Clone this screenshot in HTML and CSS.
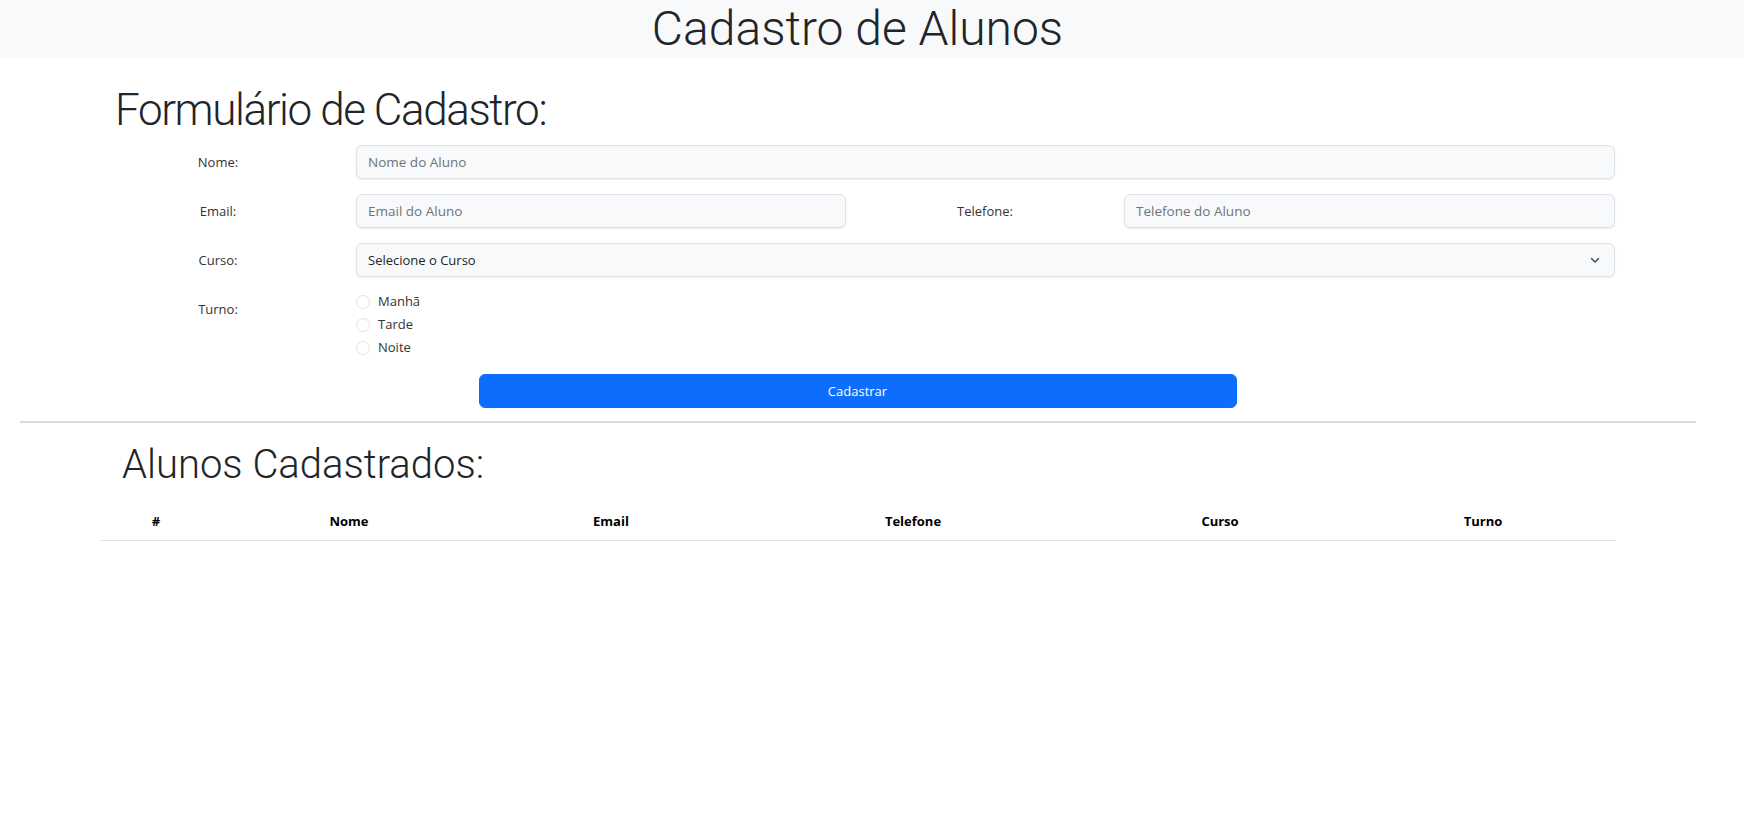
FILE: index.html
```html
<!DOCTYPE html>
<html lang="pt-BR">
<head>
<meta charset="utf-8">
<title>Cadastro de Alunos</title>
<link rel="stylesheet" href="styles.css">
</head>
<body>
<header class="topbar">
  <h1 class="topbar-title">Cadastro de Alunos</h1>
</header>
<main class="page">
  <section class="form-section">
    <h2 class="section-title">Formulário de Cadastro:</h2>
    <form class="form-grid">
      <label class="field-label" for="nome">Nome:</label>
      <input class="field-input span-3" id="nome" type="text" placeholder="Nome do Aluno">

      <label class="field-label" for="email">Email:</label>
      <input class="field-input" id="email" type="text" placeholder="Email do Aluno">
      <label class="field-label" for="tel">Telefone:</label>
      <input class="field-input" id="tel" type="text" placeholder="Telefone do Aluno">

      <label class="field-label" for="curso">Curso:</label>
      <div class="select-wrap span-3">
        <select class="field-select" id="curso">
          <option>Selecione o Curso</option>
        </select>
        <svg class="chevron" width="12" height="8" viewBox="0 0 12 8"><path d="M2.5 2.5l3.5 3.5 3.5-3.5" fill="none" stroke="#495057" stroke-width="1.5" stroke-linecap="round" stroke-linejoin="round"/></svg>
      </div>

      <span class="field-label">Turno:</span>
      <div class="radio-group span-3">
        <label class="radio-item"><span class="radio-dot"></span>Manhã</label>
        <label class="radio-item"><span class="radio-dot"></span>Tarde</label>
        <label class="radio-item"><span class="radio-dot"></span>Noite</label>
      </div>

      <div class="button-row">
        <button class="btn-primary" type="button">Cadastrar</button>
      </div>
    </form>
  </section>

  <hr class="divider">

  <section class="list-section">
    <h2 class="section-title list-title">Alunos Cadastrados:</h2>
    <table class="students">
      <thead>
        <tr>
          <th class="col-id">#</th>
          <th class="col-nome">Nome</th>
          <th class="col-email">Email</th>
          <th class="col-tel">Telefone</th>
          <th class="col-curso">Curso</th>
          <th class="col-turno">Turno</th>
        </tr>
      </thead>
      <tbody></tbody>
    </table>
  </section>
</main>
</body>
</html>
```

FILE: styles.css
```css
* { box-sizing: border-box; }

body {
  margin: 0;
  font-family: "Open Sans", "Liberation Sans", sans-serif;
  font-size: 13px;
  color: #212529;
  background: #fff;
}

.topbar {
  background: #f8f9fa;
  height: 58px;
  padding: 0 129px 0 100px;
}

.topbar-title {
  margin: 0;
  text-align: center;
  font-family: Roboto, "Open Sans", sans-serif;
  font-weight: 300;
  font-size: 48px;
  line-height: 58px;
  color: #212529;
}

.page {
  display: flex;
  flex-direction: column;
}

.form-section {
  padding: 0 129px 0 100px;
}

.section-title {
  margin: 24px 0 7px 15px;
  font-family: Roboto, "Open Sans", sans-serif;
  font-weight: 300;
  font-size: 44px;
  letter-spacing: -1.4px;
  line-height: 56px;
  color: #212529;
}

.form-grid {
  display: grid;
  grid-template-columns: 236px 490px 238px 491px;
  column-gap: 20px;
  row-gap: 15px;
}

.span-3 { grid-column: 2 / 5; }

.field-label {
  text-align: center;
  padding-top: 7px;
  line-height: 21px;
  color: #333;
}

.field-input,
.field-select {
  height: 34px;
  width: 100%;
  border: 1px solid #dfe2e6;
  border-radius: 6px;
  background: #f8f9fa;
  box-shadow: 0 1px 2px rgba(0,0,0,0.08);
  font-family: inherit;
  font-size: 13.5px;
  padding: 0 11px;
  color: #212529;
}

.field-input::placeholder { color: #6c757d; }

.select-wrap { position: relative; }

.field-select {
  appearance: none;
  -webkit-appearance: none;
  font-size: 13px;
  color: #212529;
}

.chevron {
  position: absolute;
  right: 14px;
  top: 13px;
  pointer-events: none;
}

.radio-group {
  display: flex;
  flex-direction: column;
  margin-top: -2px;
}

.radio-item {
  display: flex;
  align-items: center;
  gap: 8px;
  height: 23px;
  line-height: 23px;
  color: #333;
}

.radio-dot {
  width: 14px;
  height: 14px;
  border-radius: 50%;
  border: 1px solid #dfe2e6;
  background: #fff;
}

.button-row {
  grid-column: 1 / 5;
  display: flex;
  justify-content: center;
}

.btn-primary {
  width: 758px;
  height: 34px;
  background: #0d6efd;
  border: 1px solid #0d6efd;
  border-radius: 6px;
  color: #fff;
  font-family: inherit;
  font-size: 13px;
}

.divider {
  margin: 13px 48px 0 20px;
  border: 0;
  border-top: 2px solid #dcdcdc;
}

.list-section {
  padding: 0 128px 0 100px;
}

.list-title {
  margin: 17px 0 13px 22px;
  font-size: 40px;
  letter-spacing: 0;
  line-height: 50px;
}

.students {
  width: 100%;
  border-collapse: collapse;
}

.students th {
  font-weight: 700;
  font-size: 13px;
  color: #000;
  text-align: center;
  padding: 8px;
  line-height: 21px;
  border-bottom: 1px solid #dee2e6;
}

.col-id { width: 112px; }
.col-nome { width: 274px; }
.col-email { width: 250px; }
.col-tel { width: 354px; }
.col-curso { width: 260px; }
.col-turno { width: 266px; }
```
